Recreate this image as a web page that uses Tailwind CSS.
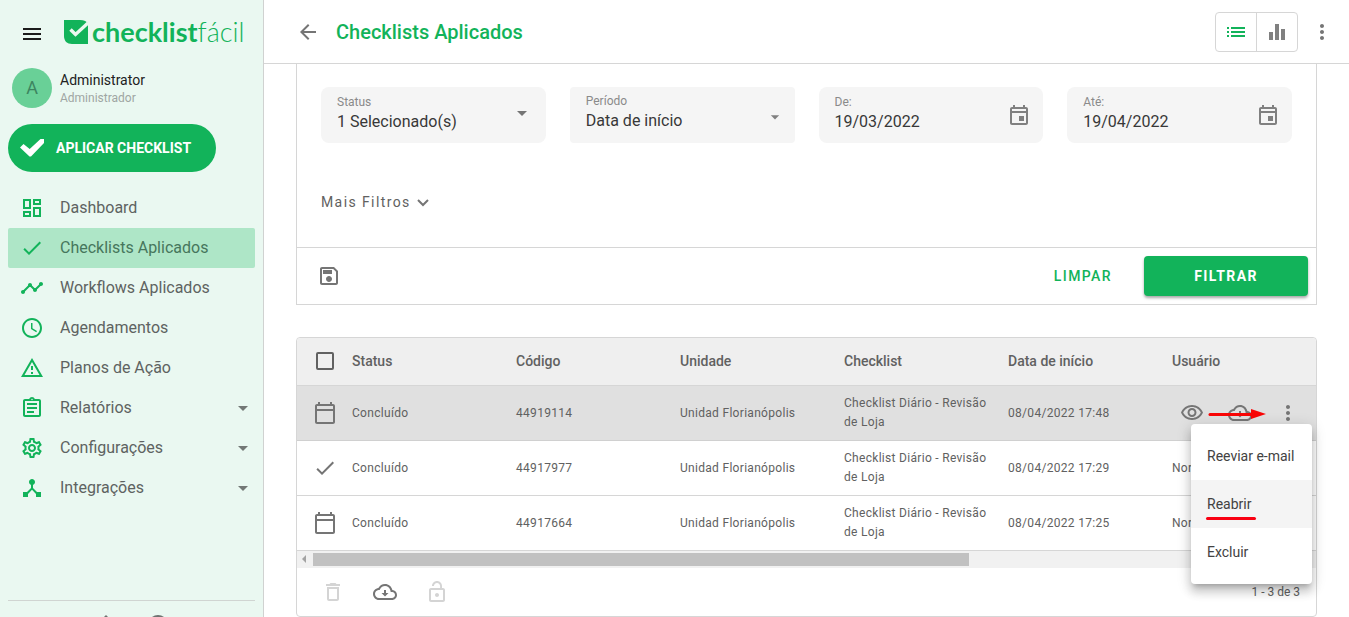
<!DOCTYPE html>
<html lang="pt-BR">
<head>
  <meta charset="UTF-8" />
  <meta name="viewport" content="width=device-width, initial-scale=1.0" />
  <title>Checklists Aplicados</title>
  <script src="https://cdn.jsdelivr.net/npm/@tailwindcss/browser@4"></script>
</head>
<body class="bg-white font-['Roboto',sans-serif] text-[#212121]">
  <!-- ICONS -->
  <svg class="hidden">
    <symbol id="i-check" viewBox="0 0 24 24"><path d="M9 16.17L4.83 12l-1.42 1.41L9 19 21 7l-1.41-1.41z"/></symbol>
    <symbol id="i-caret" viewBox="0 0 24 24"><path d="M7 10l5 5 5-5z"/></symbol>
    <symbol id="i-more" viewBox="0 0 24 24"><path d="M12 8c1.1 0 2-.9 2-2s-.9-2-2-2-2 .9-2 2 .9 2 2 2zm0 2c-1.1 0-2 .9-2 2s.9 2 2 2 2-.9 2-2-.9-2-2-2zm0 6c-1.1 0-2 .9-2 2s.9 2 2 2 2-.9 2-2-.9-2-2-2z"/></symbol>
    <symbol id="i-event" viewBox="0 0 24 24"><path d="M19 4h-1V2h-2v2H8V2H6v2H5c-1.11 0-1.99.9-1.99 2L3 20c0 1.1.89 2 2 2h14c1.1 0 2-.9 2-2V6c0-1.1-.9-2-2-2zm0 16H5V10h14v10zm0-12H5V6h14v2zm-7 5h5v5h-5z"/></symbol>
    <symbol id="i-calendar" viewBox="0 0 24 24"><path d="M20 3h-1V1h-2v2H7V1H5v2H4c-1.1 0-2 .9-2 2v16c0 1.1.9 2 2 2h16c1.1 0 2-.9 2-2V5c0-1.1-.9-2-2-2zm0 2v3H4V5h16zM4 21V10h16v11H4z"/></symbol>
    <symbol id="i-cloud" viewBox="0 0 24 24"><path d="M19.35 10.04C18.67 6.59 15.64 4 12 4 9.11 4 6.6 5.64 5.35 8.04 2.34 8.36 0 10.91 0 14c0 3.31 2.69 6 6 6h13c2.76 0 5-2.24 5-5 0-2.64-2.05-4.78-4.65-4.96zM19 18H6c-2.21 0-4-1.79-4-4 0-2.05 1.53-3.76 3.56-3.97l1.07-.11.5-.95C8.08 7.14 9.94 6 12 6c2.62 0 4.88 1.86 5.39 4.43l.3 1.5 1.53.11c1.56.1 2.78 1.41 2.78 2.96 0 1.65-1.35 3-3 3zm-6-8h-2v3H8.500l3.500 3.500 3.500-3.500H13z"/></symbol>
  </svg>

  <div class="flex h-screen overflow-hidden">
    <!-- SIDEBAR -->
    <aside class="flex w-66 shrink-0 flex-col border-r border-[#d0d2d1] bg-[#eaf8f1] px-2">
      <div class="flex h-16 items-center pl-3">
        <button aria-label="Menu" class="mt-1">
          <svg class="size-6" viewBox="0 0 24 24" fill="#1c1c1c"><path d="M3 18h18v-2H3v2zm0-5h18v-2H3v2zm0-7v2h18V6H3z"/></svg>
        </button>
        <a href="#" class="ml-5 flex items-center gap-1 text-[#12b35a]">
          <svg class="size-6" viewBox="0 0 24 24">
            <path fill="#12b35a" d="M0 0h16c4 0 7 1.500 8 4v20H8c-5 0-8-3-8-8z"/>
            <path d="M6.500 9.500l5 5L24 3" fill="none" stroke="#eaf8f1" stroke-width="3.400"/>
          </svg>
          <span class="font-['Lato',sans-serif] text-[27px] leading-8"><span class="font-bold">checklist</span><span class="font-light">fácil</span></span>
        </a>
      </div>

      <div class="flex items-center gap-2 px-1 py-1">
        <span class="flex size-10 items-center justify-center rounded-full bg-[#69d097] text-lg text-[#3d8560]">A</span>
        <div>
          <p class="text-sm leading-5">Administrator</p>
          <p class="text-xs text-[#9fa6a3]">Administrador</p>
        </div>
      </div>

      <button class="mt-3 flex h-12 w-52 items-center gap-3 rounded-full bg-[#12b35a] px-3 text-sm font-bold text-white">
        <svg class="size-6" viewBox="0 0 24 24"><path fill="#fff" d="M0 11.500l3.500-3.500 6.200 5L20.500 3H24v4L11 20.500 9.500 20.500z"/></svg>
        APLICAR CHECKLIST
      </button>

      <nav class="mt-4 flex flex-col text-base text-[#5e6361]">
        <a href="#" class="flex h-10 items-center gap-4 px-3">
          <svg class="size-6" viewBox="0 0 24 24" fill="#12b35a"><path d="M19 5v2h-4V5h4M9 5v6H5V5h4m10 8v6h-4v-6h4M9 17v2H5v-2h4M21 3h-8v6h8V3zM11 3H3v10h8V3zm10 8h-8v10h8V11zm-10 4H3v6h8v-6z"/></svg>
          Dashboard
        </a>
        <a href="#" class="flex h-10 items-center gap-4 rounded-xs bg-[#aee6c7] px-3 text-[#46765c]">
          <svg class="size-6 fill-[#12b35a]"><use href="#i-check"/></svg>
          Checklists Aplicados
        </a>
        <a href="#" class="flex h-10 items-center gap-4 px-3">
          <svg class="size-6" viewBox="0 0 24 24" fill="#12b35a"><path d="M23 8c0 1.100-.9 2-2 2-.18 0-.35-.02-.51-.07l-3.560 3.550c.05.16.07.34.07.52 0 1.100-.9 2-2 2s-2-.9-2-2c0-.18.02-.36.07-.52l-2.550-2.550c-.16.05-.34.07-.52.07s-.36-.02-.52-.07l-4.550 4.560c.05.16.07.33.07.51 0 1.100-.9 2-2 2s-2-.9-2-2 .9-2 2-2c.18 0 .35.02.51.07l4.560-4.550C8.020 9.360 8 9.180 8 9c0-1.100.9-2 2-2s2 .9 2 2c0 .18-.02.36-.07.52l2.550 2.550c.16-.05.34-.07.52-.07s.36.02.52.07l3.550-3.560C19.020 8.350 19 8.180 19 8c0-1.100.9-2 2-2s2 .9 2 2z"/></svg>
          Workflows Aplicados
        </a>
        <a href="#" class="flex h-10 items-center gap-4 px-3">
          <svg class="size-6" viewBox="0 0 24 24" fill="#12b35a"><path d="M11.990 2C6.470 2 2 6.480 2 12s4.470 10 9.990 10C17.520 22 22 17.520 22 12S17.520 2 11.990 2zM12 20c-4.420 0-8-3.580-8-8s3.580-8 8-8 8 3.580 8 8-3.580 8-8 8zm.5-13H11v6l5.250 3.150.75-1.230-4.500-2.670z"/></svg>
          Agendamentos
        </a>
        <a href="#" class="flex h-10 items-center gap-4 px-3">
          <svg class="size-6" viewBox="0 0 24 24" fill="#12b35a"><path d="M12 5.990L19.530 19H4.470L12 5.990M12 2L1 21h22L12 2zm1 14h-2v2h2v-2zm0-6h-2v4h2v-4z"/></svg>
          Planos de Ação
        </a>
        <a href="#" class="flex h-10 items-center gap-4 pl-3">
          <svg class="size-6" viewBox="0 0 24 24" fill="#12b35a"><path d="M7 15h7v2H7zm0-4h10v2H7zm0-4h10v2H7zm12-4h-4.180C14.400 1.840 13.300 1 12 1c-1.300 0-2.400.84-2.820 2H5c-1.100 0-2 .9-2 2v14c0 1.100.9 2 2 2h14c1.100 0 2-.9 2-2V5c0-1.100-.9-2-2-2zm-7-.25c.41 0 .75.34.75.75s-.34.75-.75.75-.75-.34-.75-.75.34-.75.75-.75zM19 19H5V5h14v14z"/></svg>
          Relatórios
          <svg class="ml-auto size-6 fill-[#737876]"><use href="#i-caret"/></svg>
        </a>
        <a href="#" class="flex h-10 items-center gap-4 pl-3">
          <svg class="size-6" viewBox="0 0 24 24" fill="#12b35a"><path d="M19.430 12.980c.04-.32.07-.64.07-.98 0-.34-.03-.66-.07-.98l2.110-1.650c.19-.15.24-.42.12-.64l-2-3.460c-.09-.16-.26-.25-.44-.25-.06 0-.12.01-.17.03l-2.490 1c-.52-.4-1.080-.73-1.690-.98l-.38-2.650C14.460 2.180 14.250 2 14 2h-4c-.25 0-.46.18-.49.42l-.38 2.650c-.61.25-1.170.59-1.690.98l-2.490-1c-.06-.02-.12-.03-.18-.03-.17 0-.34.09-.43.25l-2 3.460c-.13.22-.07.49.12.64l2.110 1.650c-.04.32-.07.65-.07.98 0 .33.03.66.07.98l-2.110 1.650c-.19.15-.24.42-.12.64l2 3.460c.09.16.26.25.44.25.06 0 .12-.01.17-.03l2.490-1c.52.4 1.080.73 1.690.98l.38 2.650c.03.24.24.42.49.42h4c.25 0 .46-.18.49-.42l.38-2.650c.61-.25 1.170-.59 1.690-.98l2.490 1c.06.02.12.03.18.03.17 0 .34-.09.43-.25l2-3.460c.12-.22.07-.49-.12-.64l-2.110-1.650zm-1.980-1.710c.04.31.05.52.05.73 0 .21-.02.43-.05.73l-.14 1.130.89.7 1.080.84-.7 1.210-1.270-.51-1.040-.42-.9.68c-.43.32-.84.56-1.250.73l-1.060.43-.16 1.130-.2 1.350h-1.400l-.19-1.350-.16-1.130-1.060-.43c-.43-.18-.83-.41-1.230-.71l-.91-.7-1.060.43-1.270.51-.7-1.210 1.080-.84.89-.7-.14-1.130c-.03-.31-.05-.54-.05-.74s.02-.43.05-.73l.14-1.130-.89-.7-1.080-.84.7-1.210 1.270.51 1.040.42.9-.68c.43-.32.84-.56 1.250-.73l1.060-.43.16-1.130.2-1.350h1.390l.19 1.350.16 1.130 1.060.43c.43.18.83.41 1.230.71l.91.7 1.060-.43 1.270-.51.7 1.210-1.070.85-.89.7.14 1.130zM12 8c-2.210 0-4 1.790-4 4s1.790 4 4 4 4-1.790 4-4-1.790-4-4-4zm0 6c-1.100 0-2-.9-2-2s.9-2 2-2 2 .9 2 2-.9 2-2 2z"/></svg>
          Configurações
          <svg class="ml-auto size-6 fill-[#737876]"><use href="#i-caret"/></svg>
        </a>
        <a href="#" class="flex h-10 items-center gap-4 pl-3">
          <svg class="size-6" viewBox="0 0 24 24" fill="#12b35a"><path d="M17 16l-4-4V8.820C14.160 8.400 15 7.300 15 6c0-1.660-1.340-3-3-3S9 4.340 9 6c0 1.300.84 2.400 2 2.820V12l-4 4H3v5h5v-3.050l4-4.200 4 4.200V21h5v-5h-4z"/></svg>
          Integrações
          <svg class="ml-auto size-6 fill-[#737876]"><use href="#i-caret"/></svg>
        </a>
      </nav>

      <div class="mt-auto flex h-[17px] items-start justify-center gap-7 overflow-hidden border-t border-[#d0d5d2] pt-3">
        <svg class="size-6 shrink-0" viewBox="0 0 24 24"><path fill="#6e7371" d="M12 2l8 8h-3v10H7V10H4z"/></svg>
        <svg class="size-6 shrink-0" viewBox="0 0 24 24"><circle cx="12" cy="12" r="10" fill="#6e7371"/></svg>
      </div>
    </aside>

    <main class="flex min-w-0 flex-1 flex-col">
      <!-- HEADER -->
      <header class="flex h-16 shrink-0 items-center border-b border-[#d6d6d6] pl-8 pr-[15px]">
        <a href="#" aria-label="Voltar">
          <svg class="size-6" viewBox="0 0 24 24" fill="#757575"><path d="M20 11H7.830l5.590-5.590L12 4l-8 8 8 8 1.410-1.410L7.830 13H20v-2z"/></svg>
        </a>
        <h1 class="ml-4 text-xl font-medium text-[#12b35a]">Checklists Aplicados</h1>
        <div class="ml-auto flex h-10 rounded border border-[#d6d6d6]">
          <button aria-label="Lista" class="flex w-10 items-center justify-center">
            <svg class="size-6" viewBox="0 0 24 24" fill="#12b35a"><path d="M3 13h2v-2H3v2zm0 4h2v-2H3v2zm0-8h2V7H3v2zm4 4h14v-2H7v2zm0 4h14v-2H7v2zM7 7v2h14V7H7z"/></svg>
          </button>
          <button aria-label="Gráfico" class="flex w-[41px] items-center justify-center border-l border-[#d6d6d6]">
            <svg class="size-6" viewBox="0 0 24 24" fill="#808080"><path d="M10 20h4V4h-4v16zm-6 0h4v-8H4v8zM16 9v11h4V9h-4z"/></svg>
          </button>
        </div>
        <button aria-label="Mais" class="ml-3"><svg class="size-6 fill-[#757575]"><use href="#i-more"/></svg></button>
      </header>

      <div class="px-8">
        <!-- FILTERS -->
        <section class="border-x border-b border-[#d6d6d6]">
          <div class="px-6 pb-[27px] pt-[23px]">
            <div class="grid grid-cols-4 gap-6">
              <div class="relative h-14 rounded-lg bg-[#f5f5f5] px-4 pt-[7px]">
                <label for="status" class="block text-xs text-[#8a8a8a]">Status</label>
                <select id="status" class="block h-6 w-full appearance-none text-base leading-6 text-[#383838]"><option>1 Selecionado(s)</option></select>
                <svg class="pointer-events-none absolute right-3 top-[14px] size-6 fill-[#757575]"><use href="#i-caret"/></svg>
              </div>
              <div class="relative h-14 rounded bg-[#f5f5f5] px-4 pt-[6px]">
                <label for="periodo" class="block text-xs text-[#8a8a8a]">Período</label>
                <select id="periodo" class="block h-6 w-full appearance-none text-base leading-6 text-[#383838]"><option>Data de início</option></select>
                <svg class="pointer-events-none absolute right-[10px] top-5 size-5 fill-[#808080]"><use href="#i-caret"/></svg>
              </div>
              <div class="relative h-14 rounded-lg bg-[#f5f5f5] px-4 pt-[7px]">
                <label for="de" class="block text-xs text-[#8a8a8a]">De:</label>
                <input id="de" type="text" value="19/03/2022" class="block h-6 w-full text-base leading-6 text-[#383838]" />
                <svg class="pointer-events-none absolute right-3 top-4 size-6 fill-[#808080]"><use href="#i-event"/></svg>
              </div>
              <div class="relative h-14 rounded-lg bg-[#f5f5f5] px-4 pt-[7px]">
                <label for="ate" class="block text-xs text-[#8a8a8a]">Até:</label>
                <input id="ate" type="text" value="19/04/2022" class="block h-6 w-full text-base leading-6 text-[#383838]" />
                <svg class="pointer-events-none absolute right-3 top-4 size-6 fill-[#808080]"><use href="#i-event"/></svg>
              </div>
            </div>
            <button class="mt-[41px] flex h-9 items-center gap-1 text-sm tracking-widest text-[#616161]">
              Mais Filtros
              <svg class="size-4" viewBox="0 0 16 16"><path d="M3 6l5 5 5-5" fill="none" stroke="#757575" stroke-width="2"/></svg>
            </button>
          </div>
          <div class="flex h-[57px] items-center border-t border-[#d6d6d6] pl-5 pr-2">
            <button aria-label="Salvar filtro">
              <svg class="size-6" viewBox="0 0 24 24" fill="#757575"><path d="M17 3H5c-1.110 0-2 .9-2 2v14c0 1.100.89 2 2 2h14c1.100 0 2-.9 2-2V7l-4-4zm2 16H5V5h11.170L19 7.830V19zm-7-7c-1.660 0-3 1.340-3 3s1.340 3 3 3 3-1.340 3-3-1.340-3-3-3zM6 6h9v4H6z"/></svg>
            </button>
            <button class="ml-auto px-8 text-sm font-medium tracking-widest text-[#12b35a]">LIMPAR</button>
            <button class="h-10 w-41 rounded bg-[#12b35a] text-sm font-bold tracking-widest text-white shadow-[0_2px_3px_rgba(0,0,0,0.35)]">FILTRAR</button>
          </div>
        </section>

        <!-- RESULTS -->
        <section class="relative mt-8 rounded border border-[#d6d6d6]">
          <div class="overflow-hidden rounded-t">
            <table class="w-[1530px] table-fixed border-collapse text-left text-xs tracking-wide text-[#616161]">
              <colgroup>
                <col class="w-10" /><col class="w-[164px]" /><col class="w-[164px]" /><col class="w-[164px]" /><col class="w-[164px]" /><col class="w-[164px]" /><col />
              </colgroup>
              <thead class="bg-[#efefef]">
                <tr class="h-[47px] border-b border-[#d6d6d6] text-sm tracking-normal">
                  <th class="pl-[19px]"><input type="checkbox" aria-label="Selecionar todos" class="block size-[18px] appearance-none rounded-xs border-2 border-[#616161]" /></th>
                  <th class="pl-[15px] font-medium">Status</th>
                  <th class="pl-[15px] font-medium">Código</th>
                  <th class="pl-[15px] font-medium">Unidade</th>
                  <th class="pl-[15px] font-medium">Checklist</th>
                  <th class="pl-[15px] font-medium">Data de início</th>
                  <th class="pl-[15px] font-medium">Usuário</th>
                </tr>
              </thead>
              <tbody>
                <tr class="h-[55px] border-b border-[#d0d0d0] bg-[#e0e0e0]">
                  <td class="pl-4"><svg class="size-6 fill-[#757575]"><use href="#i-calendar"/></svg></td>
                  <td class="pl-[15px]">Concluído</td>
                  <td class="pl-[15px]">44919114</td>
                  <td class="pl-[15px]">Unidad Florianópolis</td>
                  <td class="pl-[15px] leading-[19px]">Checklist Diário - Revisão de Loja</td>
                  <td class="pl-[15px]">08/04/2022 17:48</td>
                  <td></td>
                </tr>
                <tr class="h-[55px] border-b border-[#d6d6d6]">
                  <td class="pl-4"><svg class="size-6 fill-[#757575]"><use href="#i-check"/></svg></td>
                  <td class="pl-[15px]">Concluído</td>
                  <td class="pl-[15px]">44917977</td>
                  <td class="pl-[15px]">Unidad Florianópolis</td>
                  <td class="pl-[15px] leading-[19px]">Checklist Diário - Revisão de Loja</td>
                  <td class="pl-[15px]">08/04/2022 17:29</td>
                  <td class="pl-[15px]">Norma</td>
                </tr>
                <tr class="h-[55px] border-b border-[#d6d6d6]">
                  <td class="pl-4"><svg class="size-6 fill-[#757575]"><use href="#i-calendar"/></svg></td>
                  <td class="pl-[15px]">Concluído</td>
                  <td class="pl-[15px]">44917664</td>
                  <td class="pl-[15px]">Unidad Florianópolis</td>
                  <td class="pl-[15px] leading-[19px]">Checklist Diário - Revisão de Loja</td>
                  <td class="pl-[15px]">08/04/2022 17:25</td>
                  <td class="pl-[15px]">Norma</td>
                </tr>
              </tbody>
            </table>
          </div>
          <!-- horizontal scrollbar -->
          <div class="flex h-[17px] items-center bg-[#f1f1f1] px-[5px]">
            <svg class="h-2 w-1" viewBox="0 0 4 8"><path d="M4 0v8L0 4z" fill="#a3a3a3"/></svg>
            <div class="ml-[7px] h-[13px] w-[65%] bg-[#c1c1c1]"></div>
          </div>
          <div class="flex h-12 items-center gap-7 pl-6 pr-4">
            <button aria-label="Excluir selecionados" disabled>
              <svg class="size-6" viewBox="0 0 24 24" fill="#d4d4d4"><path d="M6 19c0 1.100.9 2 2 2h8c1.100 0 2-.9 2-2V7H6v12zM8 9h8v10H8V9zm7.500-5l-1-1h-5l-1 1H5v2h14V4z"/></svg>
            </button>
            <button aria-label="Baixar"><svg class="size-6 fill-[#757575]"><use href="#i-cloud"/></svg></button>
            <button aria-label="Reabrir selecionados" disabled>
              <svg class="size-6" viewBox="0 0 24 24" fill="#d4d4d4"><path d="M12 17c1.100 0 2-.9 2-2s-.9-2-2-2-2 .9-2 2 .9 2 2 2zm6-9h-1V6c0-2.760-2.240-5-5-5S7 3.240 7 6h1.900c0-1.710 1.390-3.100 3.100-3.100 1.710 0 3.100 1.390 3.100 3.100v2H6c-1.100 0-2 .9-2 2v10c0 1.100.9 2 2 2h12c1.100 0 2-.9 2-2V10c0-1.100-.9-2-2-2zm0 12H6V10h12v10z"/></svg>
            </button>
            <p class="ml-auto text-xs text-[#616161]">1 - 3 de 3</p>
          </div>

          <!-- row actions -->
          <div class="absolute right-0 top-12 flex h-[54px] items-center gap-6 bg-[#e0e0e0] pl-3 pr-4">
            <button aria-label="Visualizar">
              <svg class="size-6" viewBox="0 0 24 24" fill="#757575"><path d="M12 6c3.790 0 7.170 2.130 8.820 5.500C19.170 14.870 15.790 17 12 17s-7.170-2.130-8.820-5.500C4.830 8.130 8.210 6 12 6m0-2C7 4 2.730 7.110 1 11.500 2.730 15.890 7 19 12 19s9.270-3.110 11-7.500C21.270 7.110 17 4 12 4zm0 5c1.380 0 2.500 1.120 2.500 2.500S13.380 14 12 14s-2.500-1.120-2.500-2.500S10.620 9 12 9m0-2c-2.480 0-4.500 2.020-4.500 4.500S9.520 16 12 16s4.500-2.020 4.500-4.500S14.480 7 12 7z"/></svg>
            </button>
            <button aria-label="Baixar"><svg class="size-6 fill-[#757575]"><use href="#i-cloud"/></svg></button>
            <button aria-label="Mais opções"><svg class="size-6 fill-[#757575]"><use href="#i-more"/></svg></button>
            <svg class="absolute right-[50px] top-[22px] h-3 w-[58px]" viewBox="0 0 58 12">
              <path d="M2 6.500h42" stroke="#f90606" stroke-width="3" stroke-linecap="round"/>
              <path d="M43 1l15 5-15 5z" fill="#f90606"/>
            </svg>
          </div>

          <!-- row menu -->
          <ul class="absolute right-1 top-[86px] min-w-[121px] rounded bg-white py-2 text-sm text-[#424242] shadow-[0_5px_5px_-3px_rgba(0,0,0,0.2),0_8px_10px_1px_rgba(0,0,0,0.14),0_3px_14px_2px_rgba(0,0,0,0.12)]">
            <li><button class="h-12 px-4">Reeviar e-mail</button></li>
            <li class="relative bg-[#f4f4f4]">
              <button class="h-12 px-4">Reabrir</button>
              <span class="absolute bottom-2 left-[15px] h-[3px] w-[50px] rounded-full bg-[#f90012]"></span>
            </li>
            <li><button class="h-12 px-4">Excluir</button></li>
          </ul>
        </section>
      </div>
    </main>
  </div>
</body>
</html>
